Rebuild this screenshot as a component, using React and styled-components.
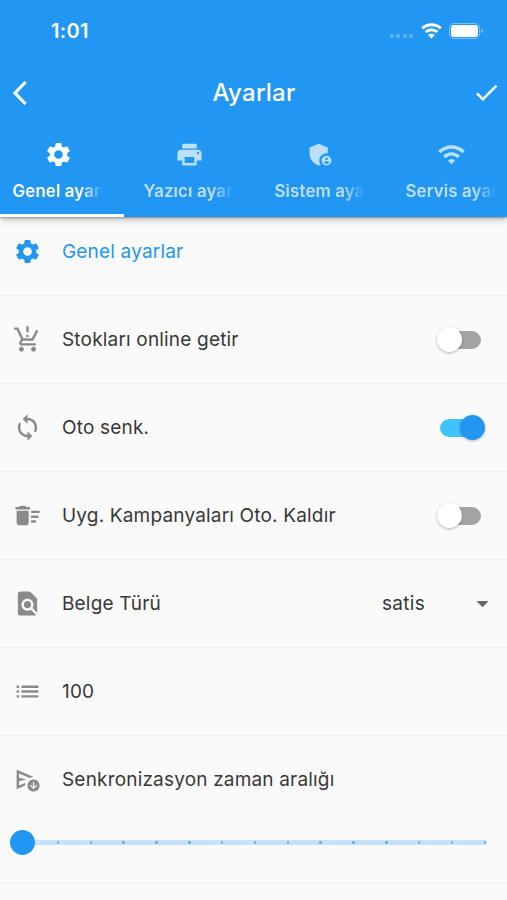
import React, { useState } from 'react'
import styled, { createGlobalStyle } from 'styled-components'
import {
  MdSettings,
  MdPrint,
  MdAdminPanelSettings,
  MdWifi,
  MdProductionQuantityLimits,
  MdSync,
  MdDeleteSweep,
  MdFindInPage,
  MdList,
  MdOutlineSendAndArchive,
  MdArrowDropDown,
  MdCheck
} from 'react-icons/md'

const tabs = [
  { label: 'Genel ayarlar', icon: MdSettings, size: 29 },
  { label: 'Yazıcı ayarları', icon: MdPrint, size: 29 },
  { label: 'Sistem ayarları', icon: MdAdminPanelSettings, size: 29 },
  { label: 'Servis ayarları', icon: MdWifi, size: 29 }
]

const ticks = Array.from({ length: 15 }, (_, i) => i)

function Toggle({ defaultOn }) {
  const [on, setOn] = useState(!!defaultOn)
  return (
    <Switch role="switch" aria-checked={on} $on={on} onClick={() => setOn(!on)}>
      <Thumb $on={on} />
    </Switch>
  )
}

export default function App() {
  const [active, setActive] = useState(0)

  return (
    <Screen>
      <GlobalStyle />
      <Header>
        <StatusBar>
          <Clock>1:01</Clock>
          <Dots>
            <i />
            <i />
            <i />
            <i />
          </Dots>
          <svg width="21" height="16" viewBox="0 0 21 16">
            <g fill="none" stroke="#fff" strokeWidth="3">
              <path d="M1.3 5.4a13.2 13.2 0 0 1 18.4 0" />
              <path d="M4.7 9a8.3 8.3 0 0 1 11.6 0" />
            </g>
            <path d="M10.5 15.6 7.2 12.1a4.7 4.7 0 0 1 6.6 0z" fill="#fff" />
          </svg>
          <Battery>
            <span />
          </Battery>
        </StatusBar>
        <NavBar>
          <svg width="28" height="28" viewBox="0 0 28 28">
            <path d="M19.6 3 9 14l10.6 11" fill="none" stroke="#fff" strokeWidth="3.2" />
          </svg>
          <Title>Ayarlar</Title>
          <MdCheck size={29} />
        </NavBar>
        <TabBar>
          {tabs.map(({ label, icon: Icon, size }, i) => (
            <Tab key={label} $active={i === active} onClick={() => setActive(i)}>
              <TabIcon>
                <Icon size={size} />
              </TabIcon>
              <TabLabel>{label}</TabLabel>
            </Tab>
          ))}
        </TabBar>
      </Header>

      <Row $first>
        <Leading $primary>
          <MdSettings size={29} />
        </Leading>
        <Label $primary>Genel ayarlar</Label>
      </Row>
      <Row>
        <Leading>
          <MdProductionQuantityLimits size={29} />
        </Leading>
        <Label>Stokları online getir</Label>
        <Toggle />
      </Row>
      <Row>
        <Leading>
          <MdSync size={29} />
        </Leading>
        <Label>Oto senk.</Label>
        <Toggle defaultOn />
      </Row>
      <Row>
        <Leading>
          <MdDeleteSweep size={29} />
        </Leading>
        <Label>Uyg. Kampanyaları Oto. Kaldır</Label>
        <Toggle />
      </Row>
      <Row>
        <Leading>
          <MdFindInPage size={29} />
        </Leading>
        <Label>Belge Türü</Label>
        <Select>
          satis
          <MdArrowDropDown size={29} />
        </Select>
      </Row>
      <Row>
        <Leading>
          <MdList size={29} />
        </Leading>
        <Label>100</Label>
      </Row>
      <SliderRow>
        <SliderHead>
          <Leading>
            <MdOutlineSendAndArchive size={29} />
          </Leading>
          <Label>Senkronizasyon zaman aralığı</Label>
        </SliderHead>
        <Slider>
          <Track>
            {ticks.map(t => (
              <i key={t} />
            ))}
          </Track>
          <SliderThumb />
        </Slider>
      </SliderRow>
    </Screen>
  )
}

const GlobalStyle = createGlobalStyle`
  * {
    box-sizing: border-box;
  }

  body {
    margin: 0;
    background: #fafafa;
  }

  svg {
    display: block;
    flex: none;
  }
`

const Screen = styled.div`
  height: 900px;
  overflow: hidden;
  background: #fafafa;
  color: #383838;
  font-family: Inter, sans-serif;
`

const Header = styled.header`
  position: relative;
  z-index: 1;
  height: 217px;
  background: #2196f3;
  color: #fff;
  box-shadow: 0 1px 2px rgba(0, 0, 0, 0.3), 0 3px 7px rgba(0, 0, 0, 0.22);
`

const StatusBar = styled.div`
  display: flex;
  align-items: center;
  height: 61px;
  padding: 0 27px 0 51px;
`

const Clock = styled.div`
  flex: 1;
  font-size: 20px;
  font-weight: 600;
  letter-spacing: 0.3px;
`

const Dots = styled.div`
  display: flex;
  gap: 2.4px;
  margin: 11px 8px 0 0;

  i {
    width: 4px;
    height: 4px;
    border-radius: 50%;
    background: rgba(255, 255, 255, 0.3);
  }
`

const Battery = styled.div`
  position: relative;
  width: 31px;
  height: 16px;
  margin-left: 7px;
  padding: 1px;
  border: 1px solid rgba(255, 255, 255, 0.4);
  border-radius: 5px;

  span {
    display: block;
    height: 100%;
    border-radius: 3px;
    background: #fff;
  }

  &::after {
    content: '';
    position: absolute;
    right: -4px;
    top: 5px;
    width: 2px;
    height: 4px;
    border-radius: 0 2px 2px 0;
    background: rgba(255, 255, 255, 0.4);
  }
`

const NavBar = styled.div`
  display: flex;
  align-items: center;
  justify-content: space-between;
  height: 63px;
  padding: 0 6px;
`

const Title = styled.h1`
  margin: 0;
  padding-left: 2px;
  font-size: 24px;
  font-weight: 500;
  letter-spacing: 0.25px;
`

const TabBar = styled.div`
  display: flex;
  height: 93px;
  margin-left: -7px;
  overflow: hidden;
`

const Tab = styled.div`
  flex: none;
  width: 131px;
  padding: 15px 19.5px 0;
  border-bottom: 3px solid ${p => (p.$active ? '#fff' : 'transparent')};
  color: ${p => (p.$active ? '#fff' : 'rgba(255, 255, 255, 0.7)')};
  cursor: pointer;
`

const TabIcon = styled.div`
  display: flex;
  align-items: center;
  justify-content: center;
  height: 30px;
`

const TabLabel = styled.div`
  margin-top: 11px;
  overflow: hidden;
  font-size: 17px;
  font-weight: 600;
  line-height: 22px;
  letter-spacing: 0.05px;
  white-space: nowrap;
  mask-image: linear-gradient(to right, #000 74%, transparent 98%);
`

const Row = styled.div`
  display: flex;
  align-items: center;
  height: ${p => (p.$first ? '79px' : '88px')};
  padding: 0 19px 0 13px;
  padding-bottom: ${p => (p.$first ? '9px' : '0')};
  border-bottom: 1px solid #efefef;
`

const Leading = styled.div`
  display: flex;
  justify-content: center;
  width: 29px;
  margin-right: 20px;
  color: ${p => (p.$primary ? '#2196f3' : '#8a8a8a')};
`

const Label = styled.div`
  flex: 1;
  font-size: 19px;
  letter-spacing: 0.18px;
  white-space: nowrap;
  color: ${p => (p.$primary ? '#2196f3' : '#383838')};
`

const Switch = styled.div`
  display: flex;
  align-items: center;
  width: 41px;
  height: 18px;
  margin-right: 7px;
  border-radius: 9px;
  background: ${p => (p.$on ? '#40c4ff' : '#a3a3a3')};
  cursor: pointer;
`

const Thumb = styled.div`
  flex: none;
  width: 25px;
  height: 25px;
  margin-left: ${p => (p.$on ? '20px' : '-3.5px')};
  border-radius: 50%;
  background: ${p => (p.$on ? '#2196f3' : '#fff')};
  box-shadow: 0 1px 3px rgba(0, 0, 0, 0.28);
`

const Select = styled.div`
  display: flex;
  align-items: center;
  justify-content: space-between;
  width: 115px;
  margin-right: -9px;
  font-size: 19px;
  letter-spacing: 0.3px;

  svg {
    color: #666;
  }
`

const SliderRow = styled.div`
  height: 147px;
  border-bottom: 1px solid #efefef;
`

const SliderHead = styled.div`
  display: flex;
  align-items: center;
  height: 87px;
  padding: 0 13px;
`

const Slider = styled.div`
  position: relative;
  padding: 17px 20px 0 22px;
`

const Track = styled.div`
  display: flex;
  align-items: center;
  justify-content: space-between;
  height: 5px;
  padding: 0 1px 0 2px;
  border-radius: 2.5px;
  background: #c5e2fa;

  i {
    width: 2.4px;
    height: 2.4px;
    border-radius: 50%;
    background: #64b0ee;
  }
`

const SliderThumb = styled.div`
  position: absolute;
  left: 10px;
  top: 7px;
  width: 25px;
  height: 25px;
  border-radius: 50%;
  background: #2196f3;
`
